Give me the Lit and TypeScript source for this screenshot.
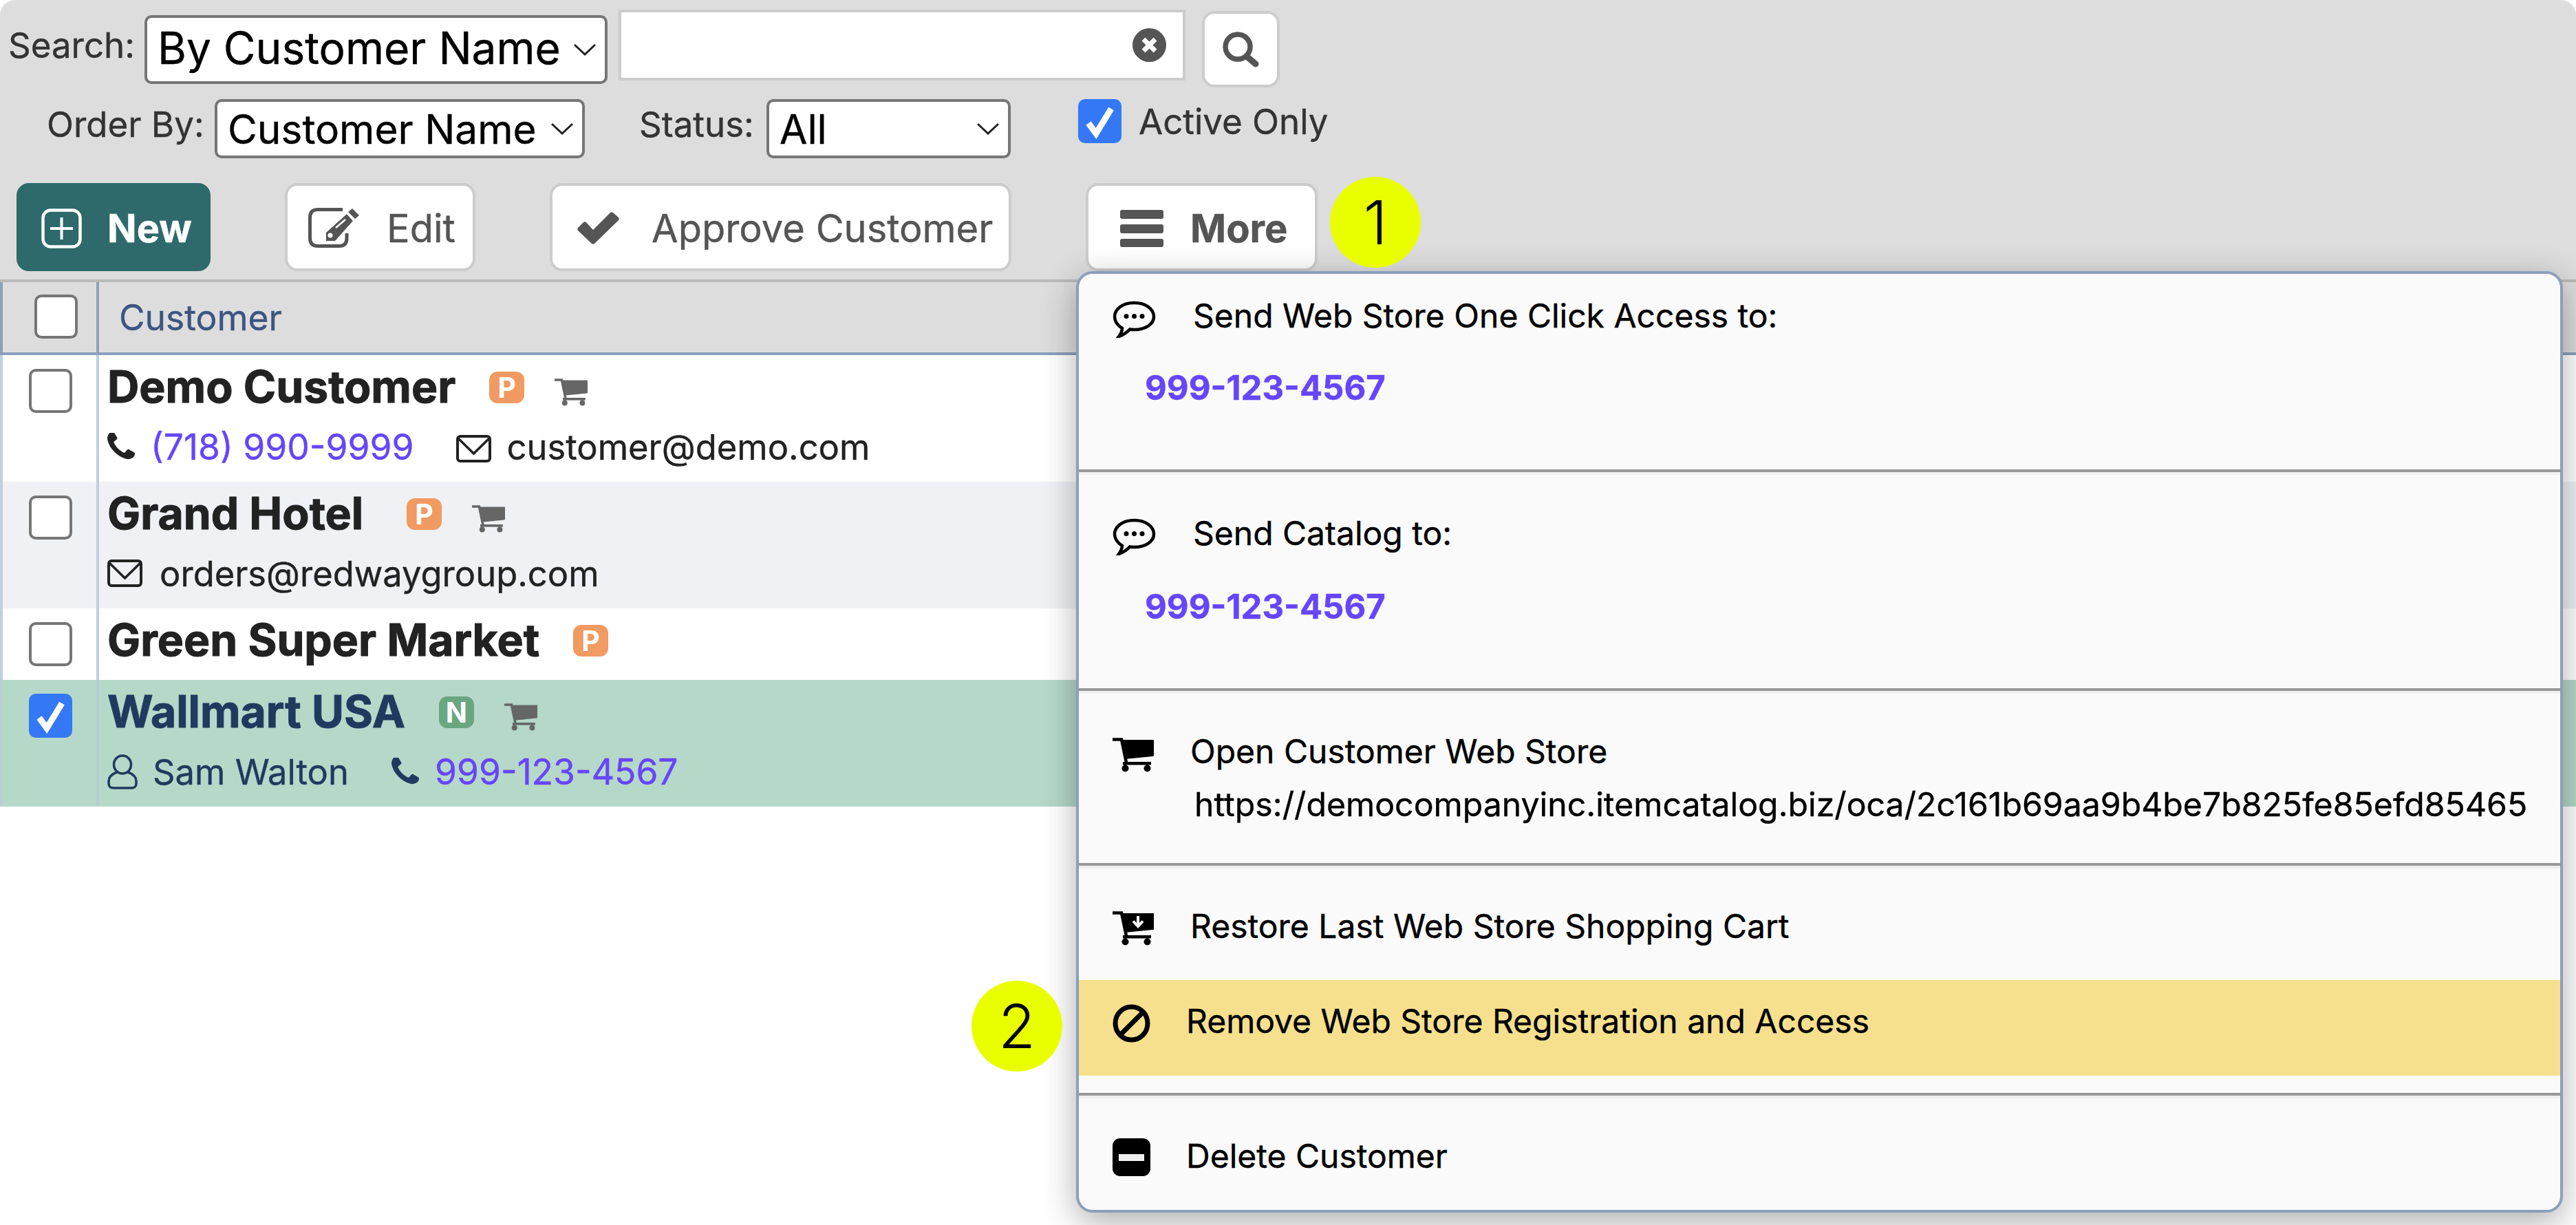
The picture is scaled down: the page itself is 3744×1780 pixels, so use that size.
import { LitElement, html, css, svg } from "lit";
import { customElement } from "lit/decorators.js";

const cart = (cls: string, arrow = false) => html`<svg class=${cls} viewBox="0 0 60 50">
  <path d="M0 2.500H13L20 36" fill="none" stroke="currentColor" stroke-width="4.500"/>
  <path d="M13 3H60V26Q60 27 58 27L18 31Z" fill="currentColor"/>
  <rect x="15" y="35" width="41" height="4.500" fill="currentColor"/>
  <path d="M18.500 36V44M50.500 36V44" stroke="currentColor" stroke-width="3"/>
  <circle cx="18.500" cy="44.500" r="5" fill="currentColor"/>
  <circle cx="50.500" cy="44.500" r="5" fill="currentColor"/>
  ${arrow ? svg`<path d="M37 7V21M30 14.500L37 22L44 14.500" fill="none" stroke="#fafafa" stroke-width="4"/>` : ""}
</svg>`;
const chat = html`<svg class="i-chat" viewBox="0 0 63 54">
  <path d="M14 40C6 35 3 29 3 23C3 12 15 3 31.5 3S60 12 60 23S48 42 31.5 42C29 42 27 42 25 41.500C22 45 17 49 9 52C12 48 14 44 14 40Z" fill="none" stroke="#000" stroke-width="4.500"/>
  <circle cx="20" cy="22.500" r="3.500"/><circle cx="31.500" cy="22.500" r="3.500"/><circle cx="43" cy="22.500" r="3.500"/>
</svg>`;
const phone = (cls: string) => html`<svg class=${cls} viewBox="192 192 1408 1408"><path fill="currentColor" d="M1600 1240q0 27-10 70.500t-21 68.500q-21 50-122 106-94 51-186 51-27 0-53-3.500t-57.500-12.500-47-14.500-55.500-20.500-49-18q-98-35-175-83-127-79-264-216t-216-264q-48-77-83-175-3-9-18-49t-20.500-55.500-14.500-47-12.500-57.500-3.500-53q0-92 51-186 56-101 106-122 25-11 68.500-21t70.500-10q14 0 21 3 18 6 53 76 11 19 30 54t35 63.500 31 53.500q3 4 17.500 25t21.500 35.500 7 28.500q0 20-28.500 50t-62 55-62 53-28.500 46q0 9 5 22.500t8.500 20.500 14 24 11.500 19q76 137 174 235t235 174q2 1 19 11.500t24 14 20.500 8.500 22.500 5q18 0 46-28.500t53-62 55-62 50-28.500q14 0 28.500 7t35.500 21.500 25 17.500q25 15 53.500 31t63.500 35 54 30q70 35 76 53 3 7 3 21z"/></svg>`;
const mail = html`<svg class="i-mail" viewBox="0 0 51 40"><rect x="2" y="2" width="47" height="36" rx="4" fill="none" stroke="currentColor" stroke-width="4"/><path d="M3 5L25.500 27L48 5" fill="none" stroke="currentColor" stroke-width="3.500"/></svg>`;
const person = html`<svg class="i-person" viewBox="0 0 44 51"><ellipse cx="22" cy="15" rx="12.500" ry="13" fill="none" stroke="currentColor" stroke-width="3.500"/><path d="M14 26C6 29 2 33 2 39V43C2 47 5 49 9 49H35C39 49 42 47 42 43V39C42 33 38 29 30 26" fill="none" stroke="currentColor" stroke-width="3.500"/></svg>`;
const chevron = html`<svg class="chev" viewBox="0 0 34 18"><path d="M2 2L17 16L32 2" fill="none" stroke="#222" stroke-width="3"/></svg>`;
const tick = html`<svg class="tick" viewBox="0 0 63 64"><path d="M15 35L26 50L48 14" fill="none" stroke="#fff" stroke-width="9"/></svg>`;

type Row = { name: string; badge: string; cart: boolean; wide?: boolean; bg?: string; checked?: boolean; contact?: unknown };

const rows: Row[] = [
  { name: "Demo Customer", badge: "P", cart: true, contact: html`<div class="contact">${phone("i-phone")}<a class="link gap-phone">(718) 990-9999</a><span class="mail-slot">${mail}</span><span class="gap-mail-text">customer@demo.com</span></div>` },
  { name: "Grand Hotel", badge: "P", cart: true, wide: true, bg: "alt", contact: html`<div class="contact"><span class="mail-first">${mail}</span><span class="gap-mail-text2">orders@redwaygroup.com</span></div>` },
  { name: "Green Super Market", badge: "P", cart: false },
  { name: "Wallmart USA", badge: "N", cart: true, bg: "sel", checked: true, contact: html`<div class="contact">${person}<span class="gap-person">Sam Walton</span><span class="phone-slot">${phone("i-phone")}</span><a class="link gap-phone2">999-123-4567</a></div>` },
];

@customElement("app-root")
export class AppRoot extends LitElement {
  static styles = css`
    :host { display: block; position: relative; width: 3744px; height: 1780px; overflow: hidden; background: #fff; font-family: Inter, "Liberation Sans", sans-serif; color: #222; -webkit-text-stroke: 0.4px; }
    * { box-sizing: border-box; }
    .toolbar { height: 410px; background: #ddd; border-bottom: 4px solid #bbb; border-radius: 22px 22px 0 0; }
    .line1 { display: flex; align-items: flex-start; height: 144px; }
    .line2 { display: flex; align-items: flex-start; height: 86px; }
    .line3 { display: flex; align-items: flex-start; margin: 36px 0 0 24px; gap: 108px; }
    .label { font-size: 51px; line-height: 50px; color: #333; white-space: nowrap; }
    .l-search { margin: 41px 0 0 12px; width: 198px; }
    .l-order { margin: 12px 0 0 68px; width: 244px; }
    .l-status { margin: 12px 0 0 79px; width: 185px; }
    .l-active { margin: 8px 0 0 25px; }
    .select { display: flex; align-items: center; justify-content: space-between; background: #fff; border: 4px solid #767676; border-radius: 10px; color: #000; padding: 0 12px 0 15px; white-space: nowrap; }
    .s-search { width: 673px; height: 100px; margin-top: 22px; font-size: 64px; line-height: 92px; }
    .s-search span { position: relative; top: -2px; }
    .s-order { width: 538px; height: 86px; font-size: 58.600px; }
    .s-status { width: 355px; height: 86px; font-size: 58.600px; }
    .chev { width: 34px; height: 18px; flex: none; }
    .input { display: flex; align-items: center; justify-content: flex-end; width: 824px; height: 103px; margin: 14px 0 0 16px; padding-right: 24px; background: #fff; border: 4px solid #ccc; }
    .i-clear { width: 49px; height: 49px; }
    .search-btn { display: flex; align-items: center; justify-content: center; width: 113px; height: 111px; margin: 16px 0 0 24px; background: #fff; border: 4px solid #ccc; border-radius: 18px; }
    .i-search { width: 53px; height: 52px; }
    .check { display: block; flex: none; width: 63px; height: 64px; background: #fff; border: 4px solid #767676; border-radius: 10px; }
    .check.on { background: #3478f6; border: none; }
    .tick { display: block; width: 63px; height: 64px; }
    .c-active { margin-left: 98px; }
    .btn { display: flex; align-items: center; height: 128px; padding-top: 3px; background: #fff; border: 4px solid #ccc; border-radius: 18px; color: #555; font-size: 56px; white-space: nowrap; }
    .b-new { width: 282px; padding-left: 32px; background: #2e6a6b; border-color: #2e6a6b; color: #fff; font-weight: 700; }
    .b-edit { width: 277px; padding-left: 30px; }
    .b-appr { width: 671px; padding-left: 35px; }
    .b-more { width: 337px; padding-left: 46px; font-weight: 700; }
    .i-plus { width: 59px; height: 58px; margin-right: 37px; }
    .i-edit { width: 76px; height: 60px; margin-right: 38px; }
    .i-okay { width: 63px; height: 49px; margin-right: 46px; }
    .i-bars { width: 63px; height: 54px; margin-right: 39px; }
    .head { display: grid; grid-template-columns: 144px 1fr; height: 106px; background: #ddd; border-bottom: 4px solid #8c9fbc; }
    .head .cell { height: 102px; border-left: 4px solid #8c9fbc; border-right: 4px solid #8c9fbc; padding: 18px 0 0 46px; }
    .head .title { padding-left: 29px; font-size: 51.500px; line-height: 102px; color: #3d5580; }
    .row { display: grid; grid-template-columns: 144px 1fr; min-height: 104px; background: #fff; }
    .row.alt { background: #eff1f5; }
    .row.sel { background: #b5d8c8; }
    .row .cell { border-left: 4px solid #c0cfe0; border-right: 4px solid #c0cfe0; padding: 20px 0 0 38px; }
    .row.sel .cell { border-color: #b6cfd4; }
    .body { padding: 14px 0 0 12px; }
    .name-line { display: flex; align-items: center; height: 64px; }
    .name { font-size: 64.200px; font-weight: 700; line-height: 64px; white-space: nowrap; -webkit-text-stroke: 1px; }
    .sel .name { color: #1f3a5f; }
    .badge { display: flex; align-items: center; justify-content: center; width: 51px; height: 46px; margin: 2px 0 0 49px; border-radius: 12px; background: #f19a62; color: #fff; font-size: 41px; font-weight: 700; -webkit-text-stroke: 0; }
    .wide .badge { margin-left: 63px; }
    .badge.n { background: #6aa67f; }
    .i-cart-g { width: 48px; height: 40px; margin: 16px 0 0 44px; color: #666; }
    .contact { display: flex; align-items: center; height: 56px; margin: 27px 0 23px 0; font-size: 50.700px; white-space: nowrap; }
    .sel .contact { color: #1f3a5f; }
    .link { color: #6645fb; font-size: 51.600px; }
    .i-phone { width: 40px; height: 40px; flex: none; }
    .i-mail { display: block; width: 51px; height: 40px; }
    .i-person { width: 44px; height: 51px; flex: none; }
    .gap-phone { margin-left: 23px; }
    .mail-slot { margin: 6px 0 0 61px; }
    .mail-first { margin: 0; }
    .gap-mail-text { margin-left: 23px; }
    .gap-mail-text2 { margin-left: 25px; }
    .gap-person { margin-left: 22px; }
    .phone-slot { display: flex; margin-left: 62px; }
    .gap-phone2 { margin-left: 23px; }
    .dot { position: absolute; display: flex; align-items: center; justify-content: center; width: 132px; height: 132px; border-radius: 50%; background: #e9ff00; color: #000; font-size: 88px; font-weight: 300; -webkit-text-stroke: 0; }
    .d1 { left: 1933px; top: 257px; }
    .d2 { left: 1412px; top: 1425px; }
    .menu { position: absolute; left: 1564px; top: 394px; width: 2161px; height: 1368px; background: #fafafa; border: 4px solid #8c9fbc; border-radius: 24px; box-shadow: 0 14px 50px rgba(0,0,0,.32); font-size: 48px; color: #000; overflow: hidden; }
    .sec { border-bottom: 4px solid #999; }
    .sec + .sec { border-top: 4px solid #f0f0f0; }
    .sec:last-child { border-bottom: none; }
    .s1 { height: 288px; padding-top: 33px; }
    .s2 { height: 318px; padding-top: 57px; }
    .s3 { height: 254px; padding-top: 56px; }
    .s4 { height: 334px; padding-top: 56px; }
    .s5 { height: 170px; padding-top: 56px; }
    .item { display: flex; align-items: center; height: 56px; padding-left: 49px; line-height: 56px; white-space: nowrap; }
    .num { height: 56px; line-height: 56px; margin: 49px 0 0 96px; color: #6645fb; font-size: 49px; font-weight: 700; }
    .s2 .num { margin-top: 51px; }
    .url { height: 56px; line-height: 56px; margin: 21px 0 0 168px; font-size: 48.200px; white-space: nowrap; }
    .i-chat { flex: none; width: 63px; height: 54px; margin: 10px 54px 0 0; }
    .i-cart-k { flex: none; width: 60px; height: 50px; margin: 10px 53px 0 0; color: #000; }
    .k2 { margin-top: 6px; }
    .i-block { flex: none; width: 55px; height: 56px; margin: 6px 52px 0 0; }
    .i-minus { flex: none; width: 55px; height: 55px; margin: 3px 52px 0 0; }
    .item.hi { height: 139px; margin-top: 50px; padding-bottom: 19px; background: #f6e08e; }
  `;

  render() {
    return html`
      <div class="toolbar">
        <div class="line1">
          <div class="label l-search">Search:</div>
          <div class="select s-search"><span>By Customer Name</span>${chevron}</div>
          <div class="input"><svg class="i-clear" viewBox="0 0 49 49"><circle cx="24.500" cy="24.500" r="24.500" fill="#555"/><path d="M16 16L33 33M33 16L16 33" stroke="#fff" stroke-width="7"/></svg></div>
          <div class="search-btn"><svg class="i-search" viewBox="0 0 53 52"><circle cx="22" cy="22" r="18" fill="none" stroke="#555" stroke-width="7.500"/><path d="M35 36L48 47" stroke="#555" stroke-width="9" stroke-linecap="round"/></svg></div>
        </div>
        <div class="line2">
          <div class="label l-order">Order By:</div>
          <div class="select s-order"><span>Customer Name</span>${chevron}</div>
          <div class="label l-status">Status:</div>
          <div class="select s-status"><span>All</span>${chevron}</div>
          <span class="check on c-active">${tick}</span>
          <div class="label l-active">Active Only</div>
        </div>
        <div class="line3">
          <div class="btn b-new"><svg class="i-plus" viewBox="0 0 59 58"><rect x="2.500" y="2.500" width="54" height="53" rx="11" fill="none" stroke="#fff" stroke-width="4.500"/><path d="M29.500 13V45M13 29H46" stroke="#fff" stroke-width="4"/></svg>New</div>
          <div class="btn b-edit"><svg class="i-edit" viewBox="0 0 76 60"><path d="M50 2.500H14Q2.500 2.500 2.500 14V44Q2.500 55.500 14 55.500H45Q56 55.500 56 44V37" fill="none" stroke="#555" stroke-width="5"/><path d="M26 36L56 9L65 19L39 48H26Z" fill="#555"/><path d="M58 6L64 1L74 11L68 16Z" fill="#555"/><path d="M40 29L54 17" stroke="#fff" stroke-width="2.500"/><circle cx="32" cy="40" r="3.500" fill="#fff"/></svg>Edit</div>
          <div class="btn b-appr"><svg class="i-okay" viewBox="0 0 63 49"><path d="M2 24L10 16C11 15 13 15 14 16L24 27L49 2C50 1 52 1 53 2L61 9C62 10 62 12 61 13L26 47C25 48 23 48 22 47L2 28C1 27 1 25 2 24Z" fill="#555"/></svg>Approve Customer</div>
          <div class="btn b-more"><svg class="i-bars" viewBox="0 0 63 54"><rect width="63" height="13" rx="3" fill="#555"/><rect y="21" width="63" height="13" rx="3" fill="#555"/><rect y="42" width="63" height="12" rx="3" fill="#555"/></svg>More</div>
        </div>
      </div>
      <div class="head">
        <div class="cell"><span class="check"></span></div>
        <div class="title">Customer</div>
      </div>
      ${rows.map((r) => html`
        <div class="row ${r.bg ?? ""} ${r.wide ? "wide" : ""}">
          <div class="cell"><span class="check ${r.checked ? "on" : ""}">${r.checked ? tick : ""}</span></div>
          <div class="body">
            <div class="name-line">
              <span class="name">${r.name}</span>
              <span class="badge ${r.badge === "N" ? "n" : ""}">${r.badge}</span>
              ${r.cart ? cart("i-cart-g") : ""}
            </div>
            ${r.contact ?? ""}
          </div>
        </div>`)}
      <div class="menu">
        <div class="sec s1">
          <div class="item">${chat}Send Web Store One Click Access to:</div>
          <div class="num">999-123-4567</div>
        </div>
        <div class="sec s2">
          <div class="item">${chat}Send Catalog to:</div>
          <div class="num">999-123-4567</div>
        </div>
        <div class="sec s3">
          <div class="item">${cart("i-cart-k")}Open Customer Web Store</div>
          <div class="url">https://democompanyinc.itemcatalog.biz/oca/2c161b69aa9b4be7b825fe85efd85465</div>
        </div>
        <div class="sec s4">
          <div class="item">${cart("i-cart-k k2", true)}Restore Last Web Store Shopping Cart</div>
          <div class="item hi"><svg class="i-block" viewBox="0 0 55 56"><ellipse cx="27.500" cy="28" rx="23.500" ry="24" fill="none" stroke="#000" stroke-width="7"/><path d="M12 44L44 12" stroke="#000" stroke-width="7"/></svg>Remove Web Store Registration and Access</div>
        </div>
        <div class="sec s5">
          <div class="item"><svg class="i-minus" viewBox="0 0 55 55"><rect width="55" height="55" rx="11"/><rect x="9" y="23" width="37" height="10" fill="#f0f0f0"/></svg>Delete Customer</div>
        </div>
      </div>
      <div class="dot d1">1</div>
      <div class="dot d2">2</div>
    `;
  }
}
